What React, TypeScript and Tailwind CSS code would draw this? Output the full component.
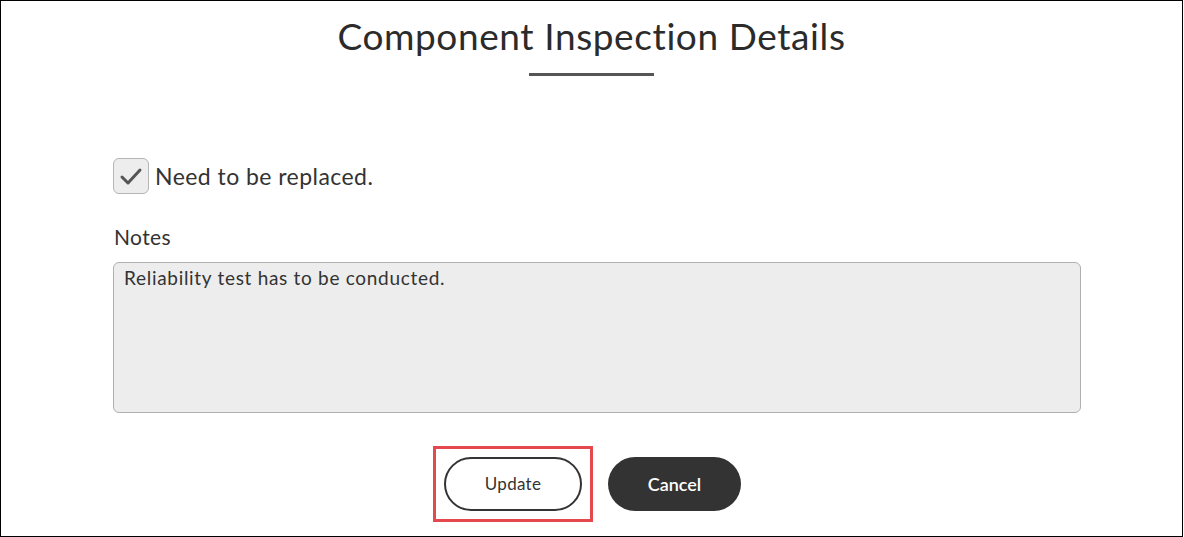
import { useState } from "react";

export default function App() {
  const [checked, setChecked] = useState(true);

  return (
    <div
      className="w-[1183px] h-[537px] border border-black bg-white text-[#333] flex flex-col"
      style={{ fontFamily: "Lato, 'Noto Sans', sans-serif" }}
    >
      <div className="flex flex-col items-center pt-[13px]">
        <h1 className="text-[37px] leading-[44px] font-normal text-[#2b2b2b] tracking-[0.6px]">
          Component Inspection Details
        </h1>
        <div className="mt-[15px] w-[125px] h-[3px] bg-[#555]" />
      </div>

      <div className="ml-[112px] w-[968px] mt-[82px]">
        <label className="flex items-center gap-[6px] cursor-pointer">
          <button
            type="button"
            onClick={() => setChecked(!checked)}
            className="w-[36px] h-[36px] rounded-[6px] border border-[#b5b5b5] bg-[#ededed] flex items-center justify-center"
          >
            {checked && (
              <svg width="26" height="26" viewBox="0 0 26 26" fill="none">
                <path d="M4 14l6 6L22 7" stroke="#555" strokeWidth="3" strokeLinecap="round" strokeLinejoin="round" />
              </svg>
            )}
          </button>
          <span className="text-[23px] leading-[28px] text-[#333] tracking-[0.45px]">Need to be replaced.</span>
        </label>

        <div className="mt-[30px] text-[21px] leading-[26px] text-[#333] pl-[1px] tracking-[0.4px]">Notes</div>
        <div className="mt-[12px] h-[151px] rounded-[6px] border border-[#b0b0b0] bg-[#ededed] px-[10px] py-[3px] text-[19px] leading-[24px] text-[#333] tracking-[0.7px]">
          Reliability test has to be conducted.
        </div>
      </div>

      <div className="flex justify-center gap-[15px] mt-[33px] pr-[9px]">
        <div className="border-[3px] border-[#e5484d] p-[8px]">
          <button className="w-[138px] h-[54px] rounded-full border-2 border-[#333] bg-white text-[17px] text-[#333] tracking-[0.3px]">
            Update
          </button>
        </div>
        <div className="py-[11px]">
          <button className="w-[133px] h-[54px] rounded-full bg-[#333] text-white text-[18px] font-semibold">
            Cancel
          </button>
        </div>
      </div>
    </div>
  );
}
